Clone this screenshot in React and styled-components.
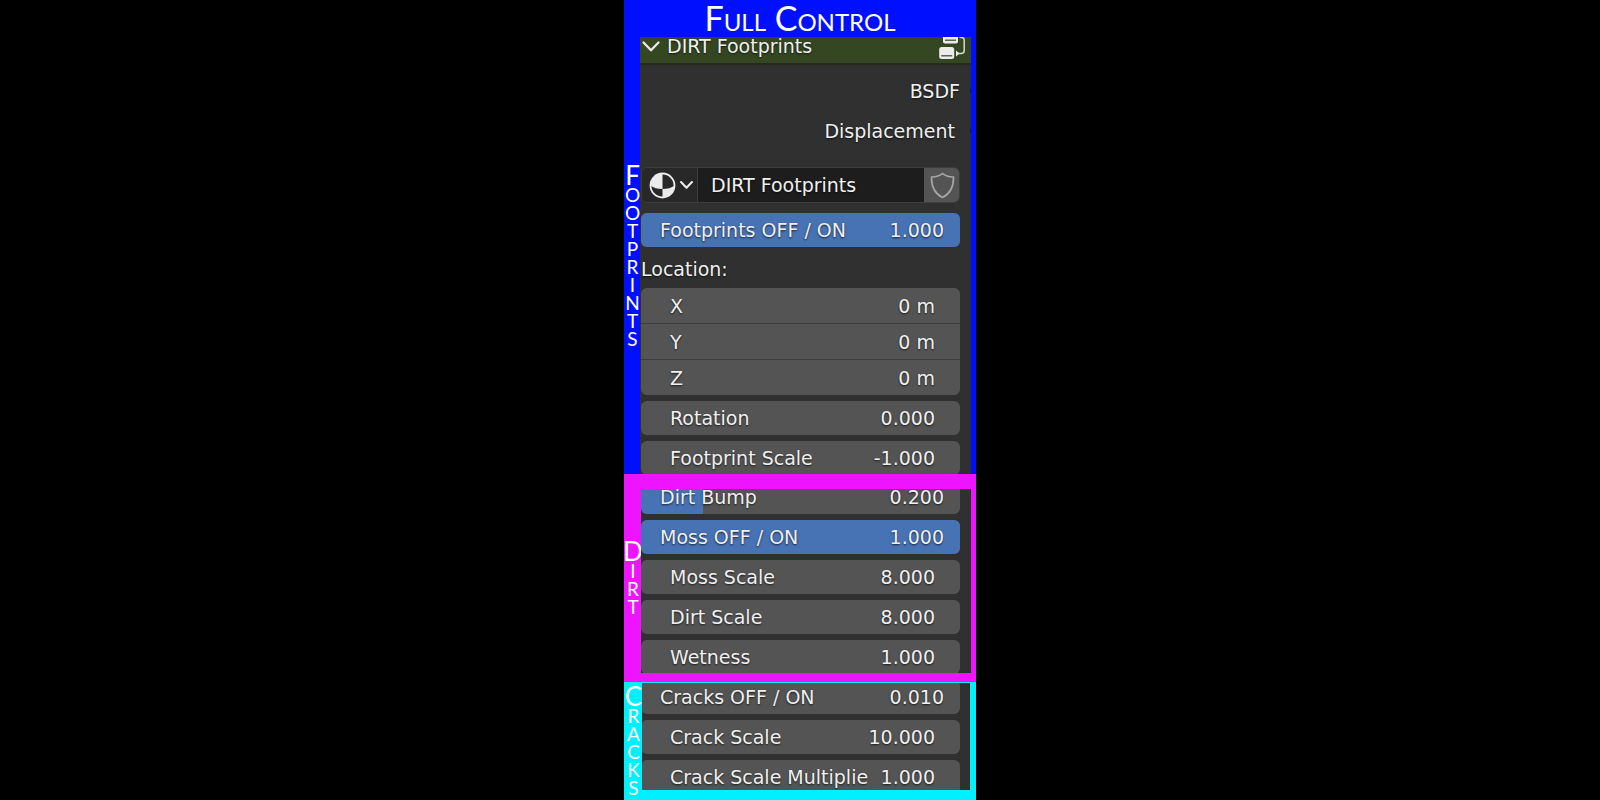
import React from "react";
import styled, { createGlobalStyle } from "styled-components";

const GlobalStyle = createGlobalStyle`
  *, *::before, *::after { box-sizing: border-box; }
  body {
    margin: 0;
    background: #000;
    color: #f0f0f0;
    font-family: "DejaVu Sans", sans-serif;
    font-size: 19px;
    line-height: 24px;
  }
  button, input { font: inherit; color: inherit; text-shadow: inherit; margin: 0; border: 0; }
`;

const Page = styled.main`
  display: flex;
  flex-direction: column;
  align-items: center;
`;

const Panel = styled.div`
  width: 22%;
  min-width: 352px;
  text-shadow: 0 1px 2px rgba(0, 0, 0, 0.7);
`;

const Title = styled.h1`
  margin: 0;
  height: 37px;
  background: #0010ff;
  color: #fff;
  font-family: Lato, sans-serif;
  font-size: 34px;
  font-weight: 400;
  font-variant: small-caps;
  line-height: 36px;
  text-align: center;
  text-shadow: none;
`;

const Section = styled.section`
  display: grid;
  grid-template-columns: ${(p) => p.$label}px minmax(0, 1fr);
  padding-right: ${(p) => p.$right}px;
  background: ${(p) => p.$color};
`;

const SideLabel = styled.h2`
  margin: 0;
  padding-left: 1px;
  align-self: center;
  display: flex;
  flex-direction: column;
  align-items: center;
  color: #fff;
  font-family: Lato, sans-serif;
  font-size: 19px;
  font-weight: 400;
  line-height: 18px;
  text-transform: uppercase;
  text-shadow: none;
`;

const Letter = styled.span`
  &:first-child {
    font-size: 26px;
    line-height: 22px;
  }
`;

const Body = styled.div`
  margin: ${(p) => p.$frame};
  overflow: hidden;
  background: #303030;
`;

const Rows = styled.div`
  display: flex;
  flex-direction: column;
  gap: 6px;
  margin: ${(p) => p.$clip};
  padding: 0 ${(p) => p.$right}px 0 ${(p) => p.$left}px;
`;

const Header = styled.header`
  display: flex;
  align-items: center;
  height: 36px;
  margin-top: -8px;
  padding: 0 5px 0 2px;
  background: #354722;
  border-bottom: 2px solid #232b1a;
`;

const HeaderToggle = styled.button`
  display: flex;
  align-items: center;
  gap: 7px;
  flex: 1;
  padding: 0;
  background: none;
  text-align: left;
`;

const Outputs = styled.div`
  padding: 6px 0 16px;
`;

const Output = styled.div`
  position: relative;
  display: flex;
  align-items: center;
  justify-content: flex-end;
  height: 40px;
  padding-right: ${(p) => p.$inset}px;
  &::after {
    content: "";
    position: absolute;
    right: -9px;
    width: 10px;
    height: 10px;
    border-radius: 50%;
    background: #141414;
  }
`;

const Selector = styled.div`
  display: flex;
  height: 36px;
  margin-bottom: 4px;
  border: 1px solid #3d3d3d;
  border-radius: 6px;
  overflow: hidden;
`;

const MaterialButton = styled.button`
  display: flex;
  align-items: center;
  gap: 4px;
  width: 55px;
  padding: 0 0 0 7px;
  background: #282828;
`;

const NameInput = styled.input`
  flex: 1;
  min-width: 0;
  padding: 0 13px;
  background: #1d1d1d;
  border-left: 1px solid #3d3d3d;
`;

const ShieldButton = styled.button`
  display: grid;
  place-items: center;
  width: 35px;
  padding: 0 0 0 2px;
  background: #545454;
`;

const GroupLabel = styled.div`
  height: 25px;
  margin-top: 4px;
`;

const Field = styled.label`
  position: relative;
  isolation: isolate;
  display: flex;
  align-items: center;
  justify-content: space-between;
  height: ${(p) => (p.$grouped ? 35 : 34)}px;
  padding: ${(p) => (p.$slider ? "0 16px 0 19px" : "0 25px 0 29px")};
  border-radius: ${(p) => (p.$grouped ? 0 : 6)}px;
  background: #545454;
  overflow: hidden;
  white-space: nowrap;
`;

const Fill = styled.span`
  position: absolute;
  inset: 0 auto 0 0;
  z-index: -1;
  background: #4772b3;
`;

const Value = styled.input`
  width: 76px;
  margin-left: -12px;
  padding: 0;
  background: none;
  text-align: right;
`;

const Vector = styled.div`
  display: flex;
  flex-direction: column;
  gap: 1px;
  border-radius: 6px;
  background: #3d3d3d;
  overflow: hidden;
`;

const Chevron = ({ width, height, stroke = 2 }) => (
  <svg width={width} height={height} viewBox="0 0 16 10" fill="none" stroke="#ececec" strokeWidth={stroke} strokeLinecap="round" strokeLinejoin="round" aria-hidden="true">
    <path d="M1.2 1.3 8 8.500 14.800 1.3" />
  </svg>
);

const NodeIcon = () => (
  <svg width="28" height="28" viewBox="0 0 28 28" aria-hidden="true">
    <rect x="5" y="2" width="15" height="9.500" rx="2" fill="#ececec" />
    <path d="M7 8.200h11" stroke="#354722" strokeWidth="1.200" />
    <rect x="1.200" y="15" width="15" height="12" rx="2.500" fill="#ececec" />
    <path d="M3.200 23.800h11" stroke="#354722" strokeWidth="1.200" />
    <path d="M21.500 5.500h2q2.700 0 2.700 2.500v10.500q0 3-3 3H19" fill="none" stroke="#d4d8ce" strokeWidth="1.500" />
    <path d="M18 18.500v6l3.500-3z" fill="#ececec" />
  </svg>
);

const MaterialIcon = () => (
  <svg width="27" height="27" viewBox="0 0 27 27" aria-hidden="true">
    <circle cx="13.500" cy="13.500" r="12" fill="#282828" stroke="#ececec" strokeWidth="1.800" />
    <path d="M13.500 1.500v15.500Q6 17 1.500 13.500A12 12 0 0 1 13.500 1.500Z" fill="#ececec" />
    <path d="M13.500 17Q21 17 25.500 13.500A12 12 0 0 1 13.500 25.500Z" fill="#ececec" />
  </svg>
);

const ShieldIcon = () => (
  <svg width="25" height="27" viewBox="0 0 25 27" fill="none" stroke="#a6a6a6" strokeWidth="1.700" strokeLinejoin="round" aria-hidden="true">
    <path d="M12.500 1.500Q9 4.800 1.500 5C1.300 15 4.500 21.500 12.500 25.500C20.500 21.500 23.700 15 23.500 5Q16 4.800 12.500 1.500Z" />
  </svg>
);

const Side = ({ text }) => (
  <SideLabel aria-label={text}>
    {text.split("").map((c, i) => (
      <Letter key={i}>{c}</Letter>
    ))}
  </SideLabel>
);

const NumberField = ({ label, value, fill, slider, grouped }) => (
  <Field $slider={slider} $grouped={grouped}>
    {fill > 0 && <Fill style={{ width: `${fill * 100}%` }} />}
    <span>{label}</span>
    <Value type="text" inputMode="decimal" defaultValue={value} />
  </Field>
);

const dirtFields = [
  { label: "Dirt Bump", value: "0.200", slider: true, fill: 0.195 },
  { label: "Moss OFF / ON", value: "1.000", slider: true, fill: 1 },
  { label: "Moss Scale", value: "8.000" },
  { label: "Dirt Scale", value: "8.000" },
  { label: "Wetness", value: "1.000" },
];

const crackFields = [
  { label: "Cracks OFF / ON", value: "0.010", slider: true },
  { label: "Crack Scale", value: "10.000" },
  { label: "Crack Scale Multiplie", value: "1.000" },
];

export default function App() {
  return (
    <Page>
      <GlobalStyle />
      <Panel>
        <Title>Full Control</Title>
        <Section $color="#0010ff" $label={16} $right={5}>
          <Side text="Footprints" />
          <Body $frame="0">
            <Header>
              <HeaderToggle type="button">
                <Chevron width={18} height={11} />
                DIRT Footprints
              </HeaderToggle>
              <NodeIcon />
            </Header>
            <Outputs>
              <Output $inset={11}>BSDF</Output>
              <Output $inset={16}>Displacement</Output>
            </Outputs>
            <Rows $clip="0 0 -1px" $left={1} $right={11}>
              <Selector>
                <MaterialButton type="button" aria-label="Browse material">
                  <MaterialIcon />
                  <Chevron width={13} height={8} stroke={2.6} />
                </MaterialButton>
                <NameInput aria-label="Material name" defaultValue="DIRT Footprints" />
                <ShieldButton type="button" aria-label="Fake user">
                  <ShieldIcon />
                </ShieldButton>
              </Selector>
              <NumberField label="Footprints OFF / ON" value="1.000" slider fill={1} />
              <GroupLabel>Location:</GroupLabel>
              <Vector>
                {["X", "Y", "Z"].map((axis) => (
                  <NumberField key={axis} label={axis} value="0 m" grouped />
                ))}
              </Vector>
              <NumberField label="Rotation" value="0.000" />
              <NumberField label="Footprint Scale" value="-1.000" />
            </Rows>
          </Body>
        </Section>
        <Section $color="#ee14ff" $label={17} $right={5}>
          <Side text="Dirt" />
          <Body $frame="15px 0 9px">
            <Rows $clip="-9px 0 -1px" $left={0} $right={11}>
              {dirtFields.map((f) => (
                <NumberField key={f.label} {...f} />
              ))}
            </Rows>
          </Body>
        </Section>
        <Section $color="#00f0ff" $label={18} $right={6}>
          <Side text="Cracks" />
          <Body $frame="1px 0 10px">
            <Rows $clip="-3px 0 -4px -1px" $left={0} $right={10}>
              {crackFields.map((f) => (
                <NumberField key={f.label} {...f} />
              ))}
            </Rows>
          </Body>
        </Section>
      </Panel>
    </Page>
  );
}
